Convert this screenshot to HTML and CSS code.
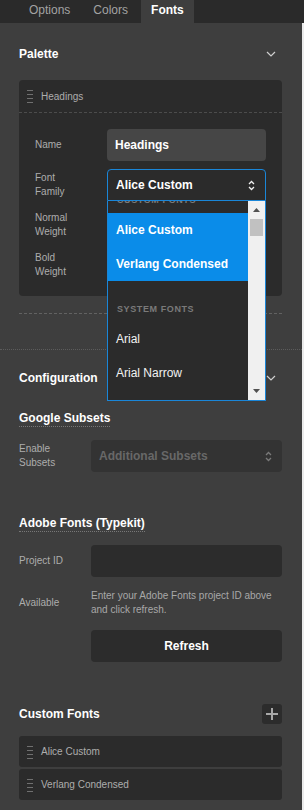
FILE: index.html
```html
<!DOCTYPE html>
<html lang="en">
<head>
    <meta charset="UTF-8">
    <meta name="viewport" content="width=device-width, initial-scale=1.0">
    <title>Fonts</title>
    <link rel="stylesheet" href="styles.css">
</head>
<body>
    <!-- Tabs -->
    <div class="tabs">
        <a class="tab">Options</a>
        <a class="tab">Colors</a>
        <a class="tab active">Fonts</a>
    </div>

    <div class="panel">
        <!-- Palette Section -->
        <section class="section palette">
            <div class="section-head">
                <h2>Palette</h2>
                <svg class="chevron" width="10" height="6" viewBox="0 0 10 6"><path d="M1 1l4 4 4-4" /></svg>
            </div>

            <div class="card">
                <div class="card-head">
                    <svg class="handle" width="6" height="14" viewBox="0 0 6 14"><path d="M0 1.5h6M0 5.5h6M0 9.5h6M0 13.5h6" /></svg>
                    Headings
                </div>
                <div class="card-body">
                    <div class="row">
                        <label class="label">Name</label>
                        <div class="field field-input">Headings</div>
                    </div>
                    <div class="row">
                        <label class="label">Font<br>Family</label>
                        <div class="field-wrap">
                            <div class="field field-select focused">
                                Alice Custom
                                <svg class="updown" width="7" height="11" viewBox="0 0 7 11"><path d="M1 4l2.5-2.5L6 4M1 7l2.5 2.5L6 7" /></svg>
                            </div>
                            <!-- open list of the font family select -->
                            <div class="listbox">
                                <div class="listbox-items">
                                    <div class="group-label">Custom Fonts</div>
                                    <div class="option selected">Alice Custom</div>
                                    <div class="option selected">Verlang Condensed</div>
                                    <div class="group-label group-gap">System Fonts</div>
                                    <div class="option">Arial</div>
                                    <div class="option">Arial Narrow</div>
                                </div>
                                <div class="scrollbar">
                                    <svg class="arrow" width="7" height="4" viewBox="0 0 7 4"><path d="M0 4L3.5 0 7 4z" /></svg>
                                    <div class="thumb"></div>
                                    <svg class="arrow arrow-down" width="7" height="4" viewBox="0 0 7 4"><path d="M0 0h7L3.5 4z" /></svg>
                                </div>
                            </div>
                        </div>
                    </div>
                    <div class="row">
                        <label class="label">Normal<br>Weight</label>
                        <div class="field field-select"></div>
                    </div>
                    <div class="row">
                        <label class="label">Bold<br>Weight</label>
                        <div class="field field-select"></div>
                    </div>
                </div>
            </div>
            <div class="drop-line"></div>
        </section>

        <!-- Configuration Section -->
        <section class="section config">
            <div class="section-head">
                <h2>Configuration</h2>
                <svg class="chevron" width="10" height="6" viewBox="0 0 10 6"><path d="M1 1l4 4 4-4" /></svg>
            </div>

            <h3 class="sub-head">Google Subsets</h3>
            <div class="row row-gap">
                <label class="label">Enable<br>Subsets</label>
                <div class="field field-select disabled">
                    Additional Subsets
                    <svg class="updown" width="7" height="11" viewBox="0 0 7 11"><path d="M1 4l2.5-2.5L6 4M1 7l2.5 2.5L6 7" /></svg>
                </div>
            </div>

            <h3 class="sub-head adobe">Adobe Fonts (Typekit)</h3>
            <div class="row row-gap">
                <label class="label">Project ID</label>
                <div class="field field-dark"></div>
            </div>
            <div class="row help-row">
                <label class="label">Available</label>
                <p class="help">Enter your Adobe Fonts project ID above and click refresh.</p>
            </div>
            <div class="row button-row">
                <span class="label"></span>
                <button type="button" class="btn">Refresh</button>
            </div>

            <div class="section-head custom-head">
                <h2>Custom Fonts</h2>
                <button type="button" class="add-btn">
                    <svg width="12" height="12" viewBox="0 0 12 12"><path d="M6 0v12M0 6h12" /></svg>
                </button>
            </div>
            <div class="font-list">
                <div class="font-item">
                    <svg class="handle" width="6" height="14" viewBox="0 0 6 14"><path d="M0 1.5h6M0 5.5h6M0 9.5h6M0 13.5h6" /></svg>
                    Alice Custom
                </div>
                <div class="font-item">
                    <svg class="handle" width="6" height="14" viewBox="0 0 6 14"><path d="M0 1.5h6M0 5.5h6M0 9.5h6M0 13.5h6" /></svg>
                    Verlang Condensed
                </div>
            </div>
        </section>
    </div>
</body>
</html>
```

FILE: styles.css
```css
* {
    margin: 0;
    padding: 0;
    box-sizing: border-box;
}

body {
    font-family: 'Liberation Sans', Arial, sans-serif;
    font-size: 12px;
    background: #3e3e3e;
    color: #fff;
    height: 810px;
    overflow: hidden;
}

/* Tabs */
.tabs {
    display: flex;
    height: 23px;
    background: #2a2a2a;
    padding-left: 19px;
    gap: 3px;
}

.tab {
    padding: 0 10px;
    line-height: 21px;
    color: #a3a3a3;
}

.tab.active {
    background: #3e3e3e;
    color: #fff;
    font-weight: bold;
}

.panel {
    width: 302px;
    height: 787px;
    box-shadow: 2px 0 0 #ebebeb;
}

.section {
    padding: 17px 20px 35px 19px;
}

.palette {
    padding-top: 19px;
}

.section-head {
    display: flex;
    justify-content: space-between;
    align-items: center;
    height: 24px;
}

h2 {
    font-size: 12px;
    font-weight: bold;
}

.chevron {
    margin-right: 6px;
}

.chevron path {
    fill: none;
    stroke: #cfcfcf;
    stroke-width: 1.2;
}

/* Card */
.card {
    margin-top: 14px;
    background: #2b2b2b;
    border-radius: 4px;
}

.card-head {
    display: flex;
    align-items: center;
    gap: 8px;
    height: 33px;
    padding-left: 8px;
    font-size: 10px;
    color: #adadad;
    border-bottom: 1px dashed #4c4c4c;
}

.handle path {
    stroke: #707070;
    stroke-width: 1;
}

.card-body {
    display: flex;
    flex-direction: column;
    gap: 8px;
    padding: 16px 16px 15px 16px;
}

.row {
    display: flex;
    align-items: center;
    min-height: 32px;
}

.label {
    flex: 0 0 72px;
    font-size: 10px;
    line-height: 14px;
    color: #adadad;
}

.field-wrap {
    position: relative;
    flex: 1;
}

.field {
    flex: 1;
    height: 32px;
    display: flex;
    align-items: center;
    justify-content: space-between;
    padding: 0 10px 0 8px;
    border-radius: 4px;
    font-weight: bold;
}

.field-input {
    background: #464646;
}

.field-select {
    background: #2b2b2b;
}

.focused {
    border: 1px solid #1a86d8;
    border-bottom-left-radius: 0;
    border-bottom-right-radius: 0;
}

.updown path {
    fill: none;
    stroke: #f0f0f0;
    stroke-width: 1.3;
}

/* Open dropdown list */
.listbox {
    position: absolute;
    top: 32px;
    left: 0;
    right: 0;
    height: 200px;
    display: flex;
    background: #2b2b2b;
    border: 1px solid #1a86d8;
    border-top: 0;
    z-index: 2;
}

.listbox-items {
    flex: 1;
    overflow: hidden;
}

.listbox-items > :first-child {
    margin-top: -14px;
}

.group-label {
    height: 26px;
    line-height: 26px;
    padding-left: 9px;
    font-size: 9px;
    font-weight: bold;
    letter-spacing: 0.6px;
    text-transform: uppercase;
    color: #7a7a7a;
}

.group-gap {
    margin-top: 15px;
}

.option {
    height: 34px;
    line-height: 34px;
    padding-left: 8px;
    color: #f2f2f2;
}

.option.selected {
    background: #0a8ce9;
    color: #fff;
    font-weight: bold;
}

.scrollbar {
    position: relative;
    flex: 0 0 17px;
    background: #f0f0f0;
}

.arrow {
    position: absolute;
    left: 5px;
    top: 7px;
}

.arrow path {
    fill: #505050;
}

.arrow-down {
    top: auto;
    bottom: 7px;
}

.thumb {
    position: absolute;
    left: 2px;
    right: 2px;
    top: 18px;
    height: 17px;
    background: #c1c1c1;
}

.drop-line {
    margin-top: 17px;
    border-top: 1px dashed #626262;
}

/* Configuration */
.config {
    border-top: 1px dotted #5c5c5c;
    padding-top: 16px;
}

.sub-head {
    display: inline-block;
    margin-top: 20px;
    font-size: 12px;
    line-height: 16px;
    border-bottom: 1px dotted #777;
}

.adobe {
    margin-top: 43px;
}

.row-gap {
    margin-top: 13px;
}

.disabled {
    background: #333;
    color: #686868;
}

.disabled .updown path {
    stroke: #7a7a7a;
}

.field-dark {
    background: #2c2c2c;
}

.help-row {
    margin-top: 12px;
    min-height: 0;
}

.help {
    flex: 1;
    font-size: 10px;
    line-height: 14px;
    color: #a8a8a8;
}

.button-row {
    margin-top: 13px;
}

.btn {
    flex: 1;
    height: 32px;
    border: none;
    border-radius: 4px;
    background: #2c2c2c;
    color: #fff;
    font-family: inherit;
    font-size: 12px;
    font-weight: bold;
}

.custom-head {
    margin-top: 42px;
    height: 20px;
}

.add-btn {
    width: 20px;
    height: 20px;
    border: none;
    border-radius: 3px;
    background: #2c2c2c;
    display: flex;
    align-items: center;
    justify-content: center;
}

.add-btn path {
    stroke: #a8a8a8;
    stroke-width: 2;
}

.font-list {
    margin-top: 12px;
    display: flex;
    flex-direction: column;
    gap: 2px;
}

.font-item {
    display: flex;
    align-items: center;
    gap: 8px;
    height: 31px;
    padding-left: 8px;
    background: #2b2b2b;
    border-radius: 3px;
    font-size: 10px;
    color: #adadad;
}
```
